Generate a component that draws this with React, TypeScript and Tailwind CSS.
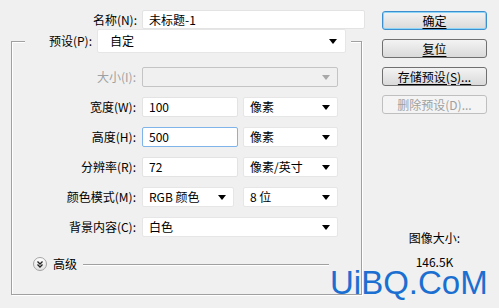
import React from "react";

const Arrow = ({ disabled }: { disabled?: boolean }) => (
  <svg width="8" height="5" viewBox="0 0 8 5" className="shrink-0">
    <polygon points="0,0 8,0 4,5" fill={disabled ? "#a8a8a8" : "#000"} />
  </svg>
);

const Input = ({ value, w, focus }: { value: string; w: string; focus?: boolean }) => (
  <div
    className={`${w} h-[20px] bg-white rounded-[2px] border flex items-center px-[6px] text-black ${
      focus ? "border-[#7eb4ea]" : "border-[#e3e3e3]"
    }`}
  >
    {value}
  </div>
);

const Select = ({ value, w, disabled }: { value: string; w: string; disabled?: boolean }) => (
  <div
    className={`${w} h-[20px] rounded-[2px] border flex items-center justify-between pl-[6px] pr-[7px] ${
      disabled ? "bg-[#f0f0f0] border-[#c4c4c4]" : "bg-white border-[#e6e6e6]"
    }`}
  >
    <span>{value}</span>
    <Arrow disabled={disabled} />
  </div>
);

const Row = ({ label, disabled, children }: { label: string; disabled?: boolean; children: React.ReactNode }) => (
  <div className="flex items-center h-[20px] mt-[10px]">
    <div className={`w-[125px] text-right pr-[1px] ${disabled ? "text-[#a0a0a0]" : "text-black"}`}>{label}</div>
    <div className="ml-[5px] flex gap-[5px]">{children}</div>
  </div>
);

const Button = ({ label, primary, disabled }: { label: string; primary?: boolean; disabled?: boolean }) => (
  <div
    className={`w-[105px] h-[19px] rounded-[3px] border flex items-center justify-center ${
      disabled
        ? "border-[#bfbfbf] bg-[#f4f4f4] text-[#a0a0a0]"
        : primary
        ? "border-[#3c8fcf] bg-gradient-to-b from-[#f3f3f3] to-[#dadada] shadow-[inset_0_0_0_1px_#8cd5f7] text-black"
        : "border-[#707070] bg-gradient-to-b from-[#f3f3f3] to-[#dadada] text-black"
    }`}
  >
    <span className={disabled ? "" : "underline underline-offset-[2px]"}>{label}</span>
  </div>
);

export default function App() {
  return (
    <div className="relative w-[499px] h-[308px] bg-[#f0f0f0] flex font-['Noto_Sans_CJK_SC',sans-serif] text-[12px] leading-[16px] overflow-hidden">
      <div className="w-[365px] pl-[11px] pt-[10px] flex flex-col">
        <div className="flex items-center h-[19px]">
          <div className="w-[126px] text-right">名称(N):</div>
          <div className="ml-[5px] w-[223px] h-[19px] bg-white border border-[#e3e3e3] rounded-[2px] flex items-center px-[6px]">
            未标题-1
          </div>
        </div>

        <fieldset className="w-[351px] border border-[#a0a0a0] shadow-[inset_1px_1px_0_#fff,1px_1px_0_#fff] p-0 pt-[4px] pb-[23px] m-0">
          <legend className="ml-[13px] mt-[4px] p-0 bg-[#f0f0f0] flex items-center">
            <div className="w-[67px] text-right">预设(P):</div>
            <div className="ml-[5px] mr-[5px] w-[249px] h-[24px] bg-white border border-[#e6e6e6] rounded-[2px] flex items-center justify-between pl-[12px] pr-[8px]">
              <span>自定</span>
              <Arrow />
            </div>
          </legend>

          <Row label="大小(I):" disabled>
            <Select value="" w="w-[196px]" disabled />
          </Row>
          <Row label="宽度(W):">
            <Input value="100" w="w-[96px]" />
            <Select value="像素" w="w-[95px]" />
          </Row>
          <Row label="高度(H):">
            <Input value="500" w="w-[96px]" focus />
            <Select value="像素" w="w-[95px]" />
          </Row>
          <Row label="分辨率(R):">
            <Input value="72" w="w-[96px]" />
            <Select value="像素/英寸" w="w-[95px]" />
          </Row>
          <Row label="颜色模式(M):">
            <Select value="RGB 颜色" w="w-[92px]" />
            <div className="ml-[4px]">
              <Select value="8 位" w="w-[95px]" />
            </div>
          </Row>
          <Row label="背景内容(C):">
            <Select value="白色" w="w-[196px]" />
          </Row>

          <div className="flex items-center h-[14px] mt-[20px] ml-[21px] mr-[32px]">
            <svg width="14" height="14" viewBox="0 0 14 14" className="shrink-0">
              <defs>
                <linearGradient id="g" x1="0" y1="0" x2="0" y2="1">
                  <stop offset="0" stopColor="#ffffff" />
                  <stop offset="1" stopColor="#e2e2e2" />
                </linearGradient>
              </defs>
              <circle cx="7" cy="7" r="6.5" fill="url(#g)" stroke="#a3a3a3" />
              <polyline points="4.5,4.5 7,7 9.5,4.5" fill="none" stroke="#222" strokeWidth="1.3" />
              <polyline points="4.5,7.5 7,10 9.5,7.5" fill="none" stroke="#222" strokeWidth="1.3" />
            </svg>
            <span className="ml-[6px]">高级</span>
            <div className="flex-1 ml-[6px] h-[1px] bg-[#a0a0a0] shadow-[0_1px_0_#fff]" />
          </div>
        </fieldset>
      </div>

      <div className="pl-[17px] pt-[11px] flex flex-col">
        <div className="flex flex-col gap-[9px]">
          <Button label="确定" primary />
          <Button label="复位" />
          <Button label="存储预设(S)..." />
          <Button label="删除预设(D)..." disabled />
        </div>
        <div className="mt-[116px] w-[105px] text-center">图像大小:</div>
        <div className="mt-[8px] w-[105px] text-center">146.5K</div>
      </div>

      <div className="absolute left-[330px] top-[272px] text-[33px] leading-[22px] text-[#1b6fd1] font-['Liberation_Sans',sans-serif]">
        UiBQ.CoM
      </div>
    </div>
  );
}
